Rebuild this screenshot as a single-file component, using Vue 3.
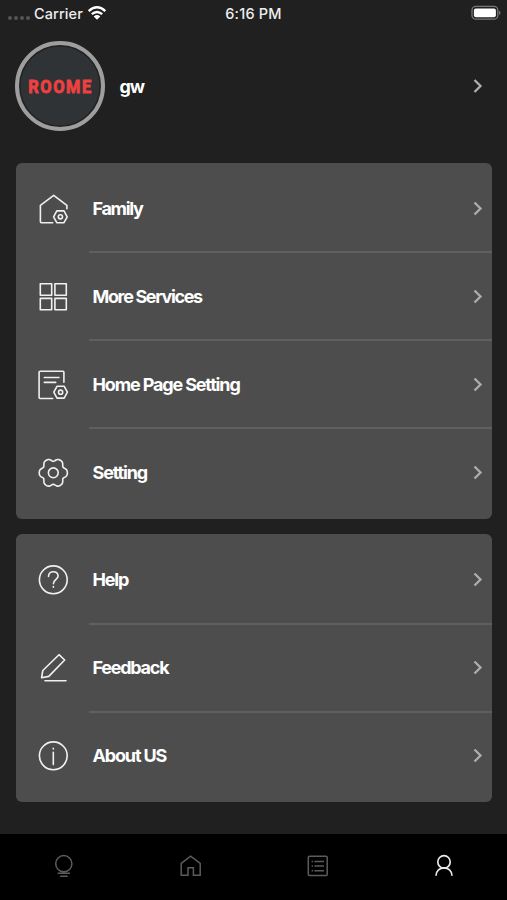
<script setup>
const hexNut = (cx, cy) =>
  `M${cx - 6.8} ${cy}L${cx - 3.6} ${cy - 5.9}H${cx + 3.6}L${cx + 6.8} ${cy}L${cx + 3.6} ${cy + 5.9}H${cx - 3.6}Z` +
  `M${cx - 2.1} ${cy}a2.1 2.1 0 1 0 4.2 0a2.1 2.1 0 1 0 -4.2 0Z`

const gear = () => {
  const points = []
  for (let i = 0; i < 120; i++) {
    const a = (i / 120) * Math.PI * 2
    const r = 12.9 + 1.45 * Math.cos(6 * a) - 0.3 * Math.cos(12 * a)
    points.push(`${(15.8 + r * Math.cos(a)).toFixed(2)} ${(15.8 + r * Math.sin(a) * 1.03).toFixed(2)}`)
  }
  return `M${points.join('L')}Z M10.9 15.8a4.9 4.9 0 1 0 9.8 0a4.9 4.9 0 1 0 -9.8 0Z`
}

const ring = 'M1.9 15.8a13.9 13.9 0 1 0 27.8 0a13.9 13.9 0 1 0 -27.8 0Z'

const groups = [
  [
    { label: 'Family', key: 'family', icon: 'M29.4 15.8V12.4L16.2 2.3L2.9 12.4V28.8Q2.9 29.8 3.9 29.8H15.2' + hexNut(22.9, 23.8) },
    { label: 'More Services', key: 'services', icon: 'M2.8 2.8H14.2V14.2H2.8ZM17.4 2.8H28.8V14.2H17.4ZM2.8 17.4H14.2V28.8H2.8ZM17.4 17.4H28.8V28.8H17.4Z' },
    { label: 'Home Page Setting', key: 'page', icon: 'M26.4 13.2V3.2Q26.4 2.2 25.4 2.2H2.6Q1.6 2.2 1.6 3.2V28.5Q1.6 29.5 2.6 29.5H15.2M6.8 8.5H21.5M6.8 13.4H18.2' + hexNut(23.1, 23.2) },
    { label: 'Setting', key: 'setting', icon: gear() },
  ],
  [
    { label: 'Help', key: 'help', icon: ring + 'M11 12.4C11 6.2 20.6 6.2 20.6 12C20.6 15.4 15.9 15.5 15.9 19.8M15.9 22.6V23.2' },
    { label: 'Feedback', key: 'feedback', icon: 'M21.5 2.7L27.2 8L11.3 24.4L4.1 25.7L5.3 18.5ZM7.5 28.7H28.5' },
    { label: 'About US', key: 'about', icon: ring + 'M15.8 8.4V8.9M15.8 12.2V24.6' },
  ],
]

const tabs = [
  { key: 'lamp', icon: 'M4.7 9.7a8.1 8.1 0 1 0 16.2 0a8.1 8.1 0 1 0 -16.2 0ZM6.6 19.3H19M9.2 22.2H16.6' },
  { key: 'home', icon: 'M3.2 21.3V9.3L12.6 2.2L22.2 9.3V21.3H15.4V13.7H10V21.3Z' },
  { key: 'list', icon: 'M4.5 2.3H21Q22.2 2.3 22.2 3.5V20.3Q22.2 21.5 21 21.5H4.5Q3.3 21.5 3.3 20.3V3.5Q3.3 2.3 4.5 2.3ZM6.6 7.4H8M9.4 7.4H19M6.6 12H8M9.4 12H19M6.6 16.7H8M9.4 16.7H19' },
  { key: 'me', active: true, icon: 'M5.8 7.9a6.2 6.2 0 1 0 12.4 0a6.2 6.2 0 1 0 -12.4 0ZM4 21.8C4 11.2 20 11.2 20 21.8' },
]
</script>

<template>
  <div class="screen">
    <header class="status">
      <div class="carrier">
        <span class="dots"><i v-for="n in 4" :key="n"></i></span>
        <span class="carrier-name">Carrier</span>
        <svg class="wifi" viewBox="0 0 20 14">
          <path d="M1.7 5.1Q10 -2.4 18.3 5.1M4.8 8.2Q10 3.6 15.2 8.2" />
          <path class="solid" d="M6.7 10.4Q10 7.7 13.3 10.4L10 13.7Z" />
        </svg>
      </div>
      <time>6:16 PM</time>
      <svg class="battery" viewBox="0 0 30 16">
        <rect class="shell" x="1" y="1.4" width="25.8" height="12.8" rx="3.8" />
        <rect class="charge" x="2.9" y="3.4" width="22" height="8.9" rx="2" />
        <path class="cap" d="M28 5.7Q29.5 6.2 29.5 7.8T28 9.9Z" />
      </svg>
    </header>

    <section class="profile">
      <div class="avatar">
        <svg class="logo" viewBox="0 0 70 32">
          <text x="3.2" y="23.4" textLength="64.6" lengthAdjust="spacingAndGlyphs">ROOME</text>
        </svg>
      </div>
      <span class="name">gw</span>
      <svg class="chevron" viewBox="0 0 12 16"><path d="M2.5 2L8.5 8L2.5 14" /></svg>
    </section>

    <main>
      <ul v-for="(group, g) in groups" :key="g" class="card">
        <li v-for="item in group" :key="item.key" class="row">
          <svg class="icon" viewBox="-0.5 0 32 32"><path :d="item.icon" /></svg>
          <div class="line">
            <span class="label" :class="item.key">{{ item.label }}</span>
            <svg class="chevron" viewBox="0 0 12 16"><path d="M2.5 1.5L8.5 7.5L2.5 13.5" /></svg>
          </div>
        </li>
      </ul>
    </main>

    <nav class="tabs">
      <span v-for="tab in tabs" :key="tab.key" class="tab" :class="{ active: tab.active }">
        <svg viewBox="0 0 24 24"><path :d="tab.icon" /></svg>
      </span>
    </nav>
  </div>
</template>

<style>
body {
  margin: 0;
  background: #202020;
}
</style>

<style scoped>
.screen {
  box-sizing: border-box;
  width: 507px;
  height: 900px;
  display: flex;
  flex-direction: column;
  overflow: hidden;
  background: #202020;
  color: #fff;
  font-family: Inter, "Liberation Sans", sans-serif;
}
svg {
  display: block;
  flex: none;
  fill: none;
}
.status {
  height: 26px;
  display: grid;
  grid-template-columns: 1fr auto 1fr;
  align-items: center;
  font-size: 14.5px;
  font-weight: 500;
  color: #eee;
}
.status time {
  letter-spacing: 0.2px;
  transform: translateY(-0.5px);
}
.carrier {
  display: flex;
  align-items: center;
  padding-left: 8px;
}
.carrier-name {
  letter-spacing: 0.1px;
  transform: translateY(-0.5px);
}
.dots {
  display: flex;
  gap: 2px;
  width: 26px;
  padding-top: 9px;
}
.dots i {
  width: 4px;
  height: 4px;
  border-radius: 50%;
  background: #555;
}
.wifi {
  width: 20px;
  height: 14px;
  margin-left: 4px;
  stroke: #fff;
  stroke-width: 2.4;
}
.wifi .solid {
  fill: #fff;
  stroke: none;
}
.battery {
  width: 30px;
  height: 16px;
  justify-self: end;
  margin-right: 6.5px;
}
.shell {
  stroke: #777;
  stroke-width: 1.3;
}
.charge {
  fill: #fff;
}
.cap {
  fill: #777;
}
.profile {
  height: 90px;
  display: flex;
  align-items: center;
  padding: 15px 23px 31.5px 15px;
}
.avatar {
  box-sizing: border-box;
  width: 90px;
  height: 90px;
  display: flex;
  align-items: center;
  justify-content: center;
  border: 4px solid #9e9e9e;
  border-radius: 50%;
  background: #303335;
  box-shadow: inset 0 0 0 1.5px #222;
}
.logo {
  width: 70px;
  height: 32px;
}
.logo text {
  fill: #ee4141;
  stroke: #ee4141;
  stroke-width: 0.9;
  stroke-linejoin: round;
  font: 700 19px Roboto, sans-serif;
  letter-spacing: 1.8px;
}
.name,
.label {
  font-size: 18px;
  font-weight: 700;
  letter-spacing: -1.15px;
}
.name {
  flex: 1;
  padding-left: 14.5px;
}
.label.family {
  letter-spacing: -1.3px;
}
.label.services {
  letter-spacing: -1.35px;
}
.label.feedback {
  letter-spacing: -1.25px;
}
.chevron {
  width: 12px;
  height: 16px;
  stroke: #adadad;
  stroke-width: 2.3;
}
main {
  flex: 1;
  display: flex;
  flex-direction: column;
  gap: 15px;
  padding: 0 15px 0 15.5px;
}
.card {
  margin: 0;
  padding: 2px 0;
  list-style: none;
  border-radius: 6px;
  background: #4d4d4d;
}
.row {
  height: 88px;
  display: flex;
  align-items: center;
  padding-left: 21.5px;
}
.icon {
  width: 32px;
  height: 32px;
  stroke: #f0f0f0;
  stroke-width: 1.6;
  stroke-linecap: round;
  stroke-linejoin: round;
}
.line {
  box-sizing: border-box;
  flex: 1;
  height: 88px;
  display: flex;
  align-items: center;
  justify-content: space-between;
  margin-left: 19.5px;
  padding: 2px 8.5px 0 4px;
  border-bottom: 2px solid #606060;
}
.card:last-child .line {
  height: 90px;
}
.row:last-child .line {
  border-bottom-color: transparent;
}
.tabs {
  height: 66px;
  display: grid;
  grid-template-columns: repeat(4, 1fr);
  background: #000;
}
.tab {
  display: flex;
  justify-content: center;
  padding-top: 20px;
}
.tab svg {
  width: 24px;
  height: 24px;
  stroke: #5c5c5c;
  stroke-width: 1.5;
}
.tab.active svg {
  stroke: #e8e8e8;
  stroke-width: 1.7;
}
</style>
